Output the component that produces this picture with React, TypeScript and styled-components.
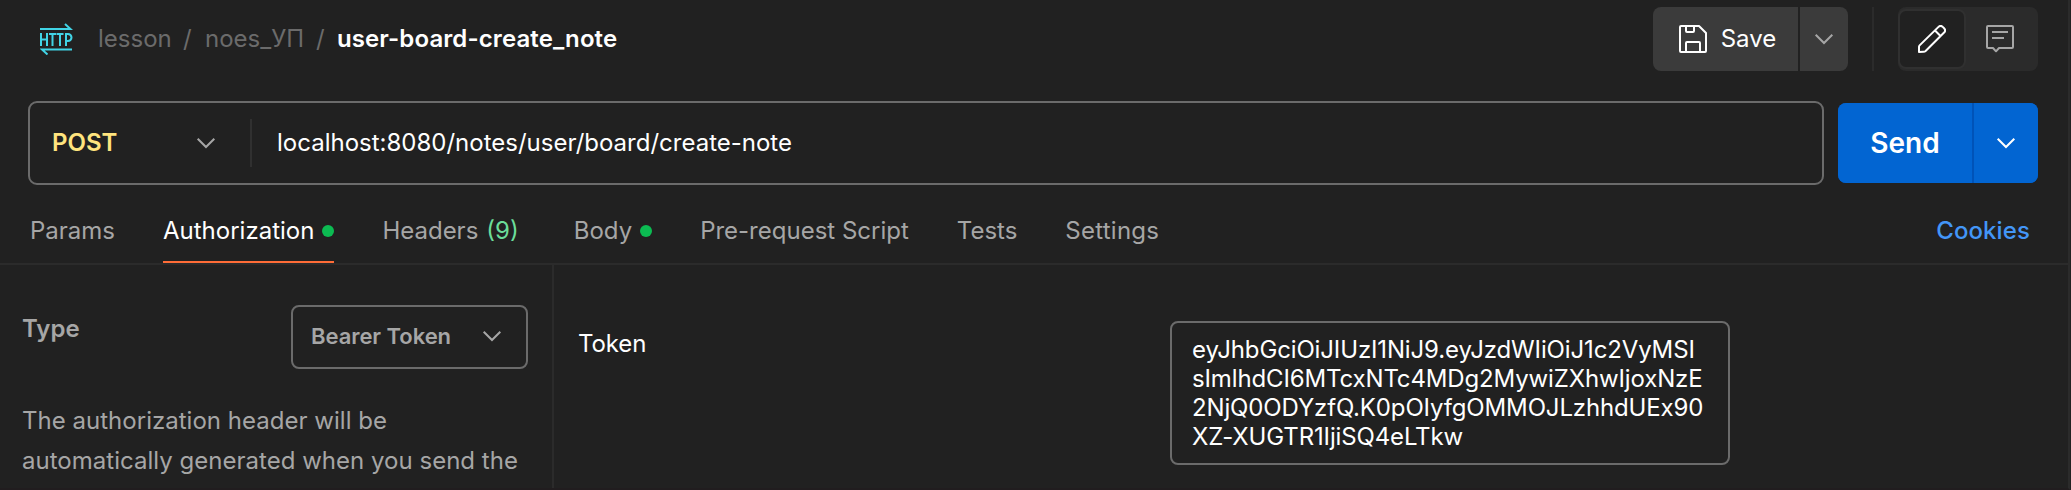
import React from "react";
import styled, { createGlobalStyle } from "styled-components";

const GlobalStyle = createGlobalStyle`
  * { box-sizing: border-box; }
  body { margin: 0; background: #212121; }
`;

const Page = styled.div`
  width: 2071px;
  height: 490px;
  overflow: hidden;
  display: flex;
  flex-direction: column;
  background: #212121;
  border-right: 1px solid #212121;
  color: #fff;
  font-family: Inter, "Liberation Sans", sans-serif;
  font-size: 24px;
  line-height: 32px;
  white-space: nowrap;
`;

const Frame = styled.main`
  flex: 1;
  min-height: 0;
  display: flex;
  flex-direction: column;
  border-right: 2px solid #2b2b2b;
  border-bottom: 2px solid #211d1f;
`;

const TopBar = styled.header`
  display: flex;
  align-items: center;
  height: 64px;
  margin-top: 7px;
  padding: 0 30px 0 40px;
`;

const Crumbs = styled.nav`
  display: flex;
  flex: 1;
  margin-left: 25px;
  color: #6b6b6b;
`;

const Crumb = styled.span<{ $width: number }>`
  width: ${(p) => p.$width}px;
`;

const Title = styled.h1`
  margin: 0;
  font-size: 24px;
  font-weight: 600;
  line-height: 32px;
  letter-spacing: 0.1px;
  color: #fff;
`;

const SaveGroup = styled.div`
  display: flex;
  gap: 2px;
  height: 64px;
  border-radius: 8px;
  overflow: hidden;
`;

const SaveButton = styled.button<{ $width: number; $indent?: number }>`
  display: flex;
  align-items: center;
  justify-content: center;
  gap: 14px;
  width: ${(p) => p.$width}px;
  padding: 0 0 0 ${(p) => p.$indent ?? 0}px;
  border: 0;
  background: #3b3b3b;
  color: #fff;
  font: inherit;
`;

const BarDivider = styled.div`
  width: 2px;
  height: 64px;
  margin: 0 24px;
  background: #2b2b2b;
`;

const ModeSwitch = styled.div`
  display: flex;
  width: 140px;
  height: 64px;
  border-radius: 8px;
  background: #2b2b2b;
`;

const ModeButton = styled.button<{ $active?: boolean }>`
  display: flex;
  align-items: center;
  justify-content: center;
  flex: 0 0 68px;
  margin: ${(p) => (p.$active ? "2px 0" : "0 4px 0 0")};
  padding: 0;
  border: 2px solid ${(p) => (p.$active ? "#303030" : "transparent")};
  border-radius: 8px;
  background: ${(p) => (p.$active ? "#212121" : "transparent")};
`;

const RequestRow = styled.section`
  display: flex;
  align-items: center;
  gap: 14px;
  height: 84px;
  margin-top: 30px;
  padding: 0 30px 0 28px;
`;

const UrlField = styled.div`
  flex: 1;
  display: flex;
  align-items: center;
  height: 84px;
  border: 2px solid #6b6b6b;
  border-radius: 9px;
`;

const Method = styled.div`
  display: flex;
  align-items: center;
  justify-content: space-between;
  width: 222px;
  height: 48px;
  padding: 0 34px 0 22px;
  border-right: 2px solid #303030;
  color: #ffe47e;
  font-weight: 600;
`;

const Url = styled.span`
  padding-left: 25px;
`;

const SendGroup = styled.div`
  display: flex;
  gap: 2px;
  width: 200px;
  height: 80px;
  border-radius: 8px;
  overflow: hidden;
  background: #0053b8;
`;

const SendButton = styled.button<{ $width: number }>`
  display: flex;
  align-items: center;
  justify-content: center;
  width: ${(p) => p.$width}px;
  padding: 0;
  border: 0;
  background: #0265d2;
  color: #fff;
  font: inherit;
  font-size: 28px;
  font-weight: 600;
`;

const TabBar = styled.nav`
  display: flex;
  height: 80px;
  padding: 0 38px 0 30px;
  border-bottom: 2px solid #2b2b2b;
`;

const Tab = styled.a<{ $active?: boolean; $gap?: number; $tracking?: number }>`
  display: flex;
  align-items: center;
  height: 78px;
  margin-right: ${(p) => p.$gap ?? 48}px;
  padding-top: 16px;
  color: ${(p) => (p.$active ? "#fff" : "#a6a6a6")};
  border-bottom: 2px solid ${(p) => (p.$active ? "#ff6c37" : "transparent")};
  letter-spacing: ${(p) => p.$tracking ?? 0}px;
`;

const Dot = styled.i`
  width: 12px;
  height: 12px;
  margin-left: 8px;
  border-radius: 50%;
  background: #0cbb52;
`;

const Count = styled.span`
  margin-left: 8px;
  color: #6bdd9a;
`;

const Cookies = styled(Tab)`
  margin-left: auto;
  margin-right: 0;
  color: #4396f7;
  font-weight: 500;
  letter-spacing: 0.1px;
`;

const Body = styled.div`
  flex: 1;
  min-height: 0;
  display: flex;
`;

const Side = styled.aside`
  width: 554px;
  padding: 40px 24px 0 22px;
  border-right: 2px solid #2b2b2b;
  color: #a6a6a6;
`;

const TypeRow = styled.div`
  display: flex;
  justify-content: space-between;
  font-weight: 600;
`;

const TypeLabel = styled.span`
  margin-top: 8px;
`;

const Select = styled.div`
  display: flex;
  align-items: center;
  justify-content: space-between;
  width: 237px;
  height: 64px;
  padding: 0 24px 2px 18px;
  border: 2px solid #6b6b6b;
  border-radius: 8px;
  font-size: 22px;
  letter-spacing: -0.05px;
`;

const Hint = styled.p`
  margin: 32px 0 0;
  line-height: 40px;
  letter-spacing: 0.02px;
`;

const Fields = styled.div`
  flex: 1;
  display: flex;
  padding: 56px 338px 0 24px;
  justify-content: space-between;
`;

const FieldLabel = styled.label`
  margin-top: 7px;
  letter-spacing: -0.1px;
`;

const TokenBox = styled.div`
  width: 560px;
  height: 144px;
  padding: 12px 20px;
  border: 2px solid #6b6b6b;
  border-radius: 8px;
  line-height: 29px;
  letter-spacing: -0.14px;
`;

const Chevron = ({ color }: { color: string }) => (
  <svg width="20" height="12" viewBox="0 0 20 12" fill="none" stroke={color} strokeWidth="2">
    <path d="M1.7 1.7 10 10l8.3-8.3" />
  </svg>
);

const HttpIcon = () => (
  <svg width="33" height="32" viewBox="0 0 33 32" fill="none" stroke="#41d4e6" strokeWidth="2">
    <path d="M0 6h30.500l-5.500-5M32 26.500H2l5.500 5" />
    <path d="M1 10v13M1 16.500h6M7 10v13M9 11h7M12.500 11v12M16.500 11h7M20 11v12M26 23V11h2a3 3 0 0 1 0 7H26" />
  </svg>
);

const SaveIcon = () => (
  <svg width="28" height="28" viewBox="0 0 28 28" fill="none" stroke="#fff" strokeWidth="2" strokeLinejoin="round">
    <path d="M1 2a1 1 0 0 1 1-1h18l7 7v18a1 1 0 0 1-1 1H2a1 1 0 0 1-1-1z" />
    <path d="M7 1v5a1 1 0 0 0 1 1h6a1 1 0 0 0 1-1V1M7 27v-9a1 1 0 0 1 1-1h12a1 1 0 0 1 1 1v9" />
  </svg>
);

const PencilIcon = () => (
  <svg width="28" height="28" viewBox="0 0 28 28" fill="none" stroke="#fff" strokeWidth="2" strokeLinejoin="round">
    <path d="M1 27v-5.200a2 2 0 0 1 .6-1.400L20.500 1.900a3 3 0 0 1 4.200 0l1.400 1.400a3 3 0 0 1 0 4.200L7.600 26a3 3 0 0 1-2 .8zM17 5.500l5.500 5.500" />
  </svg>
);

const CommentIcon = () => (
  <svg width="28" height="28" viewBox="0 0 28 28" fill="none" stroke="#a6a6a6" strokeWidth="2" strokeLinejoin="round">
    <path d="M2 1h24a1 1 0 0 1 1 1v20a1 1 0 0 1-1 1H13l-3 3.300L7 23H2a1 1 0 0 1-1-1V2a1 1 0 0 1 1-1zM6 7h16M6 13h12" />
  </svg>
);

const tokenLines = [
  "eyJhbGciOiJIUzI1NiJ9.eyJzdWIiOiJ1c2VyMSI",
  "sImlhdCI6MTcxNTc4MDg2MywiZXhwIjoxNzE",
  "2NjQ0ODYzfQ.K0pOIyfgOMMOJLzhhdUEx90",
  "XZ-XUGTR1IjiSQ4eLTkw",
];

export default function App() {
  return (
    <Page>
      <GlobalStyle />
      <Frame>
        <TopBar>
          <HttpIcon />
          <Crumbs>
            <Crumb $width={85}>lesson</Crumb>
            <Crumb $width={22}>/</Crumb>
            <Crumb $width={111}>noes_УП</Crumb>
            <Crumb $width={21}>/</Crumb>
            <Title>user-board-create_note</Title>
          </Crumbs>
          <SaveGroup>
            <SaveButton $width={145} $indent={4}>
              <SaveIcon />
              Save
            </SaveButton>
            <SaveButton $width={48}>
              <Chevron color="#a6a6a6" />
            </SaveButton>
          </SaveGroup>
          <BarDivider />
          <ModeSwitch>
            <ModeButton $active>
              <PencilIcon />
            </ModeButton>
            <ModeButton>
              <CommentIcon />
            </ModeButton>
          </ModeSwitch>
        </TopBar>
        <RequestRow>
          <UrlField>
            <Method>
              POST
              <Chevron color="#a6a6a6" />
            </Method>
            <Url>localhost:8080/notes/user/board/create-note</Url>
          </UrlField>
          <SendGroup>
            <SendButton $width={134}>Send</SendButton>
            <SendButton $width={64}>
              <Chevron color="#fff" />
            </SendButton>
          </SendGroup>
        </RequestRow>
        <TabBar>
          <Tab>Params</Tab>
          <Tab $active>
            Authorization
            <Dot />
          </Tab>
          <Tab $gap={55}>
            Headers
            <Count>(9)</Count>
          </Tab>
          <Tab>
            Body
            <Dot />
          </Tab>
          <Tab>Pre-request Script</Tab>
          <Tab>Tests</Tab>
          <Tab $tracking={0.25}>Settings</Tab>
          <Cookies>Cookies</Cookies>
        </TabBar>
        <Body>
          <Side>
            <TypeRow>
              <TypeLabel>Type</TypeLabel>
              <Select>
                Bearer Token
                <Chevron color="#a6a6a6" />
              </Select>
            </TypeRow>
            <Hint>
              The authorization header will be
              <br />
              automatically generated when you send the
            </Hint>
          </Side>
          <Fields>
            <FieldLabel>Token</FieldLabel>
            <TokenBox>
              {tokenLines.map((line) => (
                <div key={line}>{line}</div>
              ))}
            </TokenBox>
          </Fields>
        </Body>
      </Frame>
    </Page>
  );
}
